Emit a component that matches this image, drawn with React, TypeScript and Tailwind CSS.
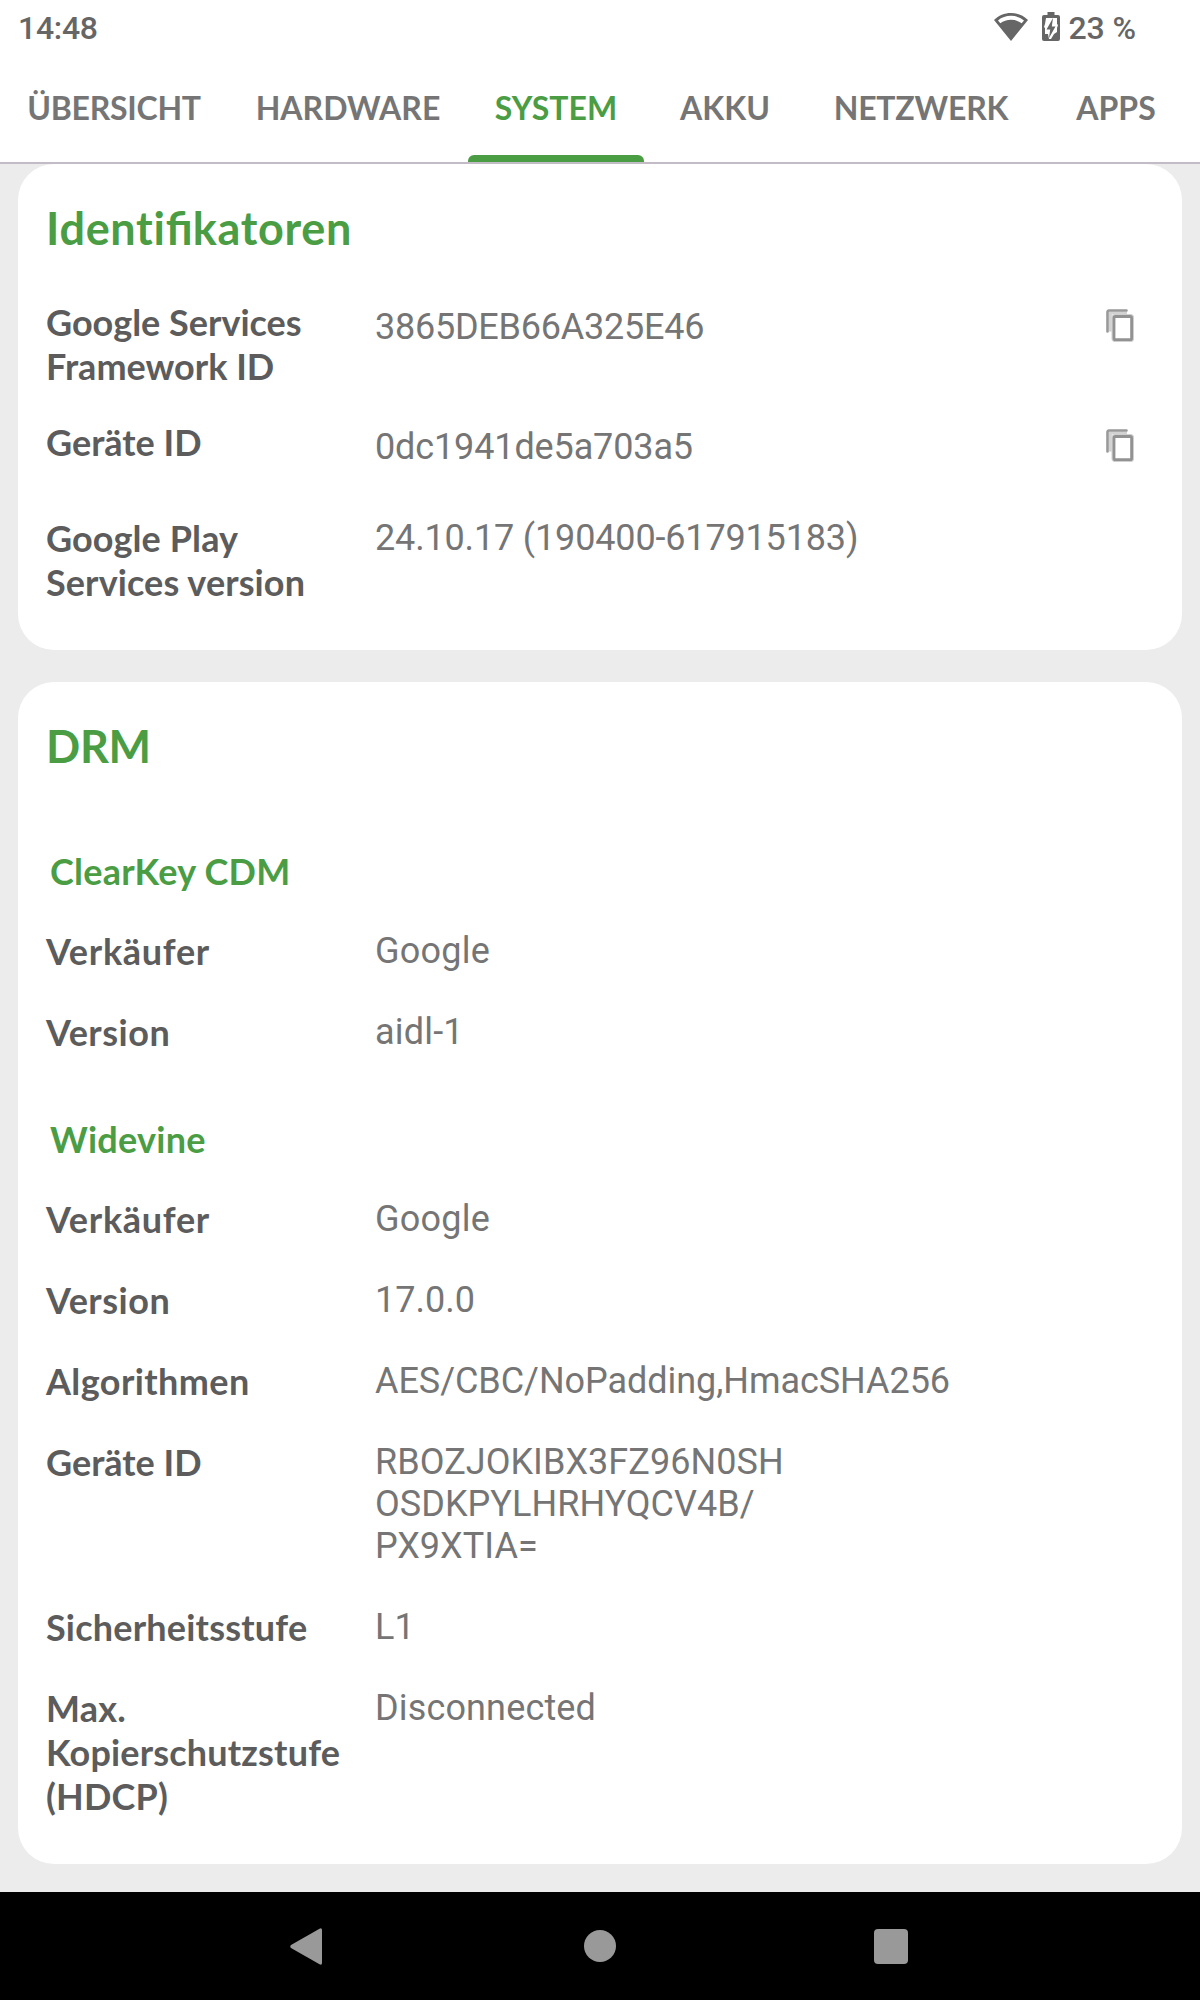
interface Tab {
  label: string;
  width: string;
  active?: boolean;
}

interface InfoRow {
  label: string[];
  value: string[];
  labelClass?: string;
  valueClass?: string;
}

const TABS: Tab[] = [
  { label: "ÜBERSICHT", width: "w-[228px] tracking-[-0.25px]" },
  { label: "HARDWARE", width: "w-[240px]" },
  { label: "SYSTEM", width: "w-[176px]", active: true },
  { label: "AKKU", width: "w-[162px]" },
  { label: "NETZWERK", width: "w-[230px] tracking-[-0.2px]" },
  { label: "APPS", width: "w-[160px]" },
];

const CLEARKEY: InfoRow[] = [
  { label: ["Verkäufer"], value: ["Google"], labelClass: "tracking-[0.7px]", valueClass: "tracking-[0.25px]" },
  { label: ["Version"], value: ["aidl-1"], labelClass: "tracking-[0.5px]", valueClass: "tracking-[0.2px]" },
];

const WIDEVINE: InfoRow[] = [
  { label: ["Verkäufer"], value: ["Google"], labelClass: "tracking-[0.7px]", valueClass: "tracking-[0.25px]" },
  { label: ["Version"], value: ["17.0.0"], labelClass: "tracking-[0.5px]" },
  { label: ["Algorithmen"], value: ["AES/CBC/NoPadding,HmacSHA256"], labelClass: "tracking-[0.4px]", valueClass: "tracking-[-0.05px]" },
  { label: ["Geräte ID"], value: ["RBOZJOKIBX3FZ96N0SH", "OSDKPYLHRHYQCV4B/", "PX9XTIA="], valueClass: "mb-px tracking-[0.05px]" },
  { label: ["Sicherheitsstufe"], value: ["L1"], labelClass: "tracking-[0.2px]" },
  { label: ["Max.", "Kopierschutzstufe", "(HDCP)"], value: ["Disconnected"], labelClass: "tracking-[0.18px]", valueClass: "tracking-[0.15px]" },
];

function WifiIcon() {
  return (
    <svg width="34" height="28" viewBox="0 0 34 28" fill="#666">
      <path d="M17 0C10.5 0 4.600 2.500 0 7L17 28 34 7C29.400 2.500 23.500 0 17 0Zm0 2.800c4.900 0 9.300 1.600 13 4.600l-2.300 2.900C24.700 8 21 6.800 17 6.800S9.300 8 6.300 10.300L4 7.400c3.700-3 8.100-4.600 13-4.600Z" />
    </svg>
  );
}

function BatteryIcon() {
  return (
    <svg width="18" height="29" viewBox="0 0 18 29">
      <path fill="#666" d="M5.500 0h7v3H16a2 2 0 0 1 2 2v22a2 2 0 0 1-2 2H2a2 2 0 0 1-2-2V5a2 2 0 0 1 2-2h3.500Z" />
      <path fill="#fff" d="M4 6h11v6l1 1-1 3v4l-3 2-3 5H7l-1-5H3v-6l-1-1 1-3Z" />
      <path fill="#666" d="M11 6 4.500 17.500h3.700L7 26l6.500-11.500H9.800Z" />
    </svg>
  );
}

function CopyIcon() {
  return (
    <svg width="28" height="33" viewBox="0 0 28 33" fill="none" className="block">
      <path d="M4.300 22.500V4H21" stroke="#d2d2d2" strokeWidth="3" />
      <path d="M1.500 22.500V3a1.500 1.500 0 0 1 1.500-1.500H20.500" stroke="#999" strokeWidth="2.600" strokeLinecap="round" />
      <rect x="7.800" y="7.300" width="18" height="23.500" rx="1.500" stroke="#d0d0d0" strokeWidth="4.600" />
      <rect x="8" y="7.500" width="17.600" height="23.200" rx="1.500" fill="#fff" stroke="#929292" strokeWidth="2.800" />
    </svg>
  );
}

function Lines({ lines }: { lines: string[] }) {
  return (
    <>
      {lines.map((line) => (
        <div key={line} className="whitespace-nowrap">{line}</div>
      ))}
    </>
  );
}

function Row({ row, offset = "pt-px", copy = false }: { row: InfoRow; offset?: string; copy?: boolean }) {
  return (
    <div className="flex items-start">
      <div className={`w-[329px] shrink-0 font-[Lato,sans-serif] text-[36px] leading-[44px] font-bold text-[#5c5c5c] ${row.labelClass ?? ""}`}>
        <Lines lines={row.label} />
      </div>
      <div className={`flex-1 font-[Roboto,sans-serif] text-[36px] leading-[42px] text-[#757575] ${offset} ${row.valueClass ?? ""}`}>
        <Lines lines={row.value} />
      </div>
      {copy && (
        <button className="mt-[9px] mr-[48px]">
          <CopyIcon />
        </button>
      )}
    </div>
  );
}

function Group({ title, rows }: { title: string; rows: InfoRow[] }) {
  return (
    <section>
      <h3 className="mb-[36px] pl-1 font-[Lato,sans-serif] text-[36px] leading-[44px] font-bold tracking-[0.25px] text-[#4b9d44]">
        {title}
      </h3>
      <div className="flex flex-col gap-[37px]">
        {rows.map((row) => (
          <Row key={row.label[0]} row={row} />
        ))}
      </div>
    </section>
  );
}

export default function App() {
  return (
    <div className="flex h-[2000px] w-[1200px] flex-col overflow-hidden bg-[#ececec]">
      {/* status bar */}
      <header className="flex h-[54px] shrink-0 items-start justify-between bg-white pr-[64px] pl-[18px] font-[Roboto,sans-serif] text-[32px] leading-[36px] font-medium text-[#666]">
        <span className="mt-[10px] tracking-[-0.3px]">14:48</span>
        <div className="flex items-start">
          <span className="mt-[13px] mr-[14px]"><WifiIcon /></span>
          <span className="mt-[12px] mr-[9px]"><BatteryIcon /></span>
          <span className="mt-[10px] tracking-[-0.1px]">23 %</span>
        </div>
      </header>

      {/* tabs */}
      <nav className="flex h-[110px] shrink-0 border-b-2 border-[#c3bcc6] bg-white font-[Lato,sans-serif] text-[32px] leading-[40px] font-bold">
        {TABS.map((tab) => (
          <div
            key={tab.label}
            className={`flex shrink-0 flex-col items-center justify-between pt-[34px] ${tab.width} ${
              tab.active ? "text-[#4b9d44]" : "text-[#757575]"
            }`}
          >
            <span>{tab.label}</span>
            {tab.active && <div className="h-[7px] w-full rounded-t-[6px] bg-[#4b9d44]" />}
          </div>
        ))}
      </nav>

      <main className="flex flex-1 flex-col gap-8 px-[18px]">
        <div className="h-[486px] rounded-[36px] bg-white pt-[36px] pl-[28px]">
          <h2 className="mb-[44px] font-[Lato,sans-serif] text-[45px] leading-[56px] font-bold tracking-[0.7px] text-[#4b9d44]">
            Identi<span className="tracking-normal">fi</span>katoren
          </h2>
          <Row
            row={{ label: ["Google Services", "Framework ID"], value: ["3865DEB66A325E46"], valueClass: "tracking-[-0.24px]" }}
            offset="pt-[6px]"
            copy
          />
          <div className="mt-8 mb-12">
            <Row row={{ label: ["Geräte ID"], value: ["0dc1941de5a703a5"], valueClass: "tracking-[-0.13px]" }} offset="pt-[6px]" copy />
          </div>
          <Row
            row={{
              label: ["Google Play", "Services version"],
              value: ["24.10.17 (190400-617915183)"],
              labelClass: "tracking-[0.1px]",
              valueClass: "tracking-[-0.16px]",
            }}
          />
        </div>

        <div className="h-[1182px] rounded-[36px] bg-white pt-[36px] pl-[28px]">
          <h2 className="mb-[75px] font-[Lato,sans-serif] text-[45px] leading-[56px] font-bold tracking-[-0.3px] text-[#4b9d44]">DRM</h2>
          <div className="flex flex-col gap-[63px]">
            <Group title="ClearKey CDM" rows={CLEARKEY} />
            <Group title="Widevine" rows={WIDEVINE} />
          </div>
        </div>
      </main>

      {/* navigation bar */}
      <footer className="flex h-[108px] shrink-0 items-center justify-between bg-black pr-[292px] pl-[290px]">
        <svg width="33" height="37" viewBox="0 0 33 37">
          <path d="M1 17 29.500 .7Q32 -.4 32 2V35Q32 37.400 29.500 36.300L1 20Q-.5 18.500 1 17Z" fill="#999" />
        </svg>
        <div className="ml-[3px] size-8 rounded-full bg-[#999]" />
        <div className="h-[35px] w-[34px] rounded-[4px] bg-[#999]" />
      </footer>
    </div>
  );
}
